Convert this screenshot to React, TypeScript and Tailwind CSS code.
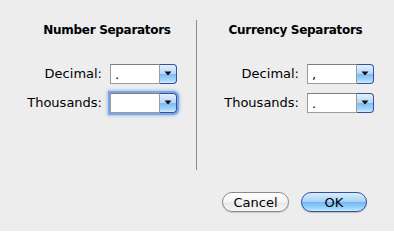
import React from "react";

function Arrow() {
  return (
    <svg width="8" height="5" viewBox="0 0 8 5" className="block">
      <path d="M0.5 0.5 L7.5 0.5 L4 4.5 Z" fill="#111" />
    </svg>
  );
}

function Combo({ value, focused }: { value: string; focused?: boolean }) {
  return (
    <div
      className={
        "flex h-[20px] w-[67px] rounded-r-[4px] " +
        (focused ? "shadow-[0_0_0_2px_#78a8e2,0_0_3px_3px_#a4c6ee]" : "")
      }
    >
      <div className="flex h-full flex-1 items-end border border-[#9b9b9b] border-t-[#7d7d7d] bg-white pb-[2px] pl-[4px] text-[13px] leading-none text-black">
        {value}
      </div>
      <div className="flex h-full w-[17px] items-center justify-center rounded-r-[4px] border border-l-0 border-[#3a4f9c] bg-[linear-gradient(to_bottom,#e4f1fd_0%,#b4d8f8_48%,#7ebcf1_52%,#a6d6fb_85%,#d2efff_100%)] pb-[1px]">
        <Arrow />
      </div>
    </div>
  );
}

function Row({ label, value, focused }: { label: string; value: string; focused?: boolean }) {
  return (
    <div className="flex items-center justify-end gap-[8px]">
      <span className="text-[13px] text-black">{label}</span>
      <Combo value={value} focused={focused} />
    </div>
  );
}

export default function App() {
  return (
    <div className="h-[231px] w-[394px] overflow-hidden bg-[#ededed] font-['DejaVu_Sans',sans-serif] text-black">
      <div className="flex h-[170px] pt-[20px]">
        <div className="flex w-[196px] flex-col pl-[18px]">
          <h2 className="mt-[2px] text-center text-[12px] font-bold tracking-[-0.3px] leading-[16px]">Number Separators</h2>
          <div className="mt-[26px] flex flex-col gap-[9px] pr-[19px]">
            <Row label="Decimal:" value="." />
            <Row label="Thousands:" value="" focused />
          </div>
        </div>
        <div className="w-px bg-[#8c8c8c]" />
        <div className="flex flex-1 flex-col">
          <h2 className="mt-[2px] text-center text-[12px] font-bold tracking-[-0.3px] leading-[16px]">Currency Separators</h2>
          <div className="mt-[26px] flex flex-col gap-[9px] pr-[20px]">
            <Row label="Decimal:" value="," />
            <Row label="Thousands:" value="." />
          </div>
        </div>
      </div>
      <div className="mt-[22px] flex justify-end gap-[12px] pr-[27px]">
        <button className="h-[20px] w-[67px] rounded-full border border-[#8a8a8a] bg-[linear-gradient(to_bottom,#ffffff_0%,#f4f4f4_50%,#e8e8e8_55%,#f7f7f7_100%)] text-[13px] leading-none shadow-[0_1px_1px_rgba(0,0,0,0.15)]">
          Cancel
        </button>
        <button className="h-[20px] w-[66px] rounded-full border border-[#33519a] bg-[linear-gradient(to_bottom,#d9ecfd_0%,#a7d1f8_48%,#72b6f1_52%,#9ed5fd_85%,#c9edff_100%)] text-[13px] leading-none shadow-[0_1px_1px_rgba(0,0,0,0.2)]">
          OK
        </button>
      </div>
    </div>
  );
}
